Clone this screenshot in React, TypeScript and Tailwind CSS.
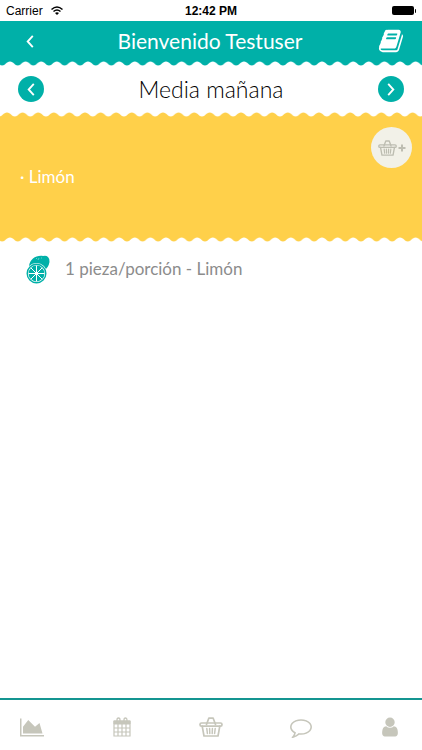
import React from 'react';

type IconProps = {
  className?: string;
};

const BookIcon = ({ className }: IconProps) => (
  <svg className={className} viewBox="0 0 1792 1792" fill="currentColor" aria-hidden="true">
    <path d="M1703 478q40 57 18 129l-275 906q-19 64-76.5 107.5t-122.5 43.5h-923q-77 0-148.5-53.5t-99.5-131.5q-24-67-2-127 0-4 3-27t4-37q1-8-3-21.5t-3-19.5q2-11 8-21t16.5-23.5 16.5-23.5q23-38 45-91.5t30-91.5q3-10 .5-30t-.5-28q3-11 17-28t17-23q21-36 42-92t25-90q1-9-2.5-32t.5-28q4-13 22-30.5t22-22.5q19-26 42.5-84.5t27.5-96.5q1-8-3-25.5t-2-26.5q2-8 9-18t18-23 17-21q8-12 16.5-30.5t15-35 16-36 19.5-32 26.5-23.5 36-11.5 47.5 5.5l-1 3q38-9 51-9h761q74 0 114 56t18 130l-274 906q-36 119-71.5 153.5t-128.5 34.5h-869q-27 0-38 15-11 16-1 43 24 70 144 70h923q29 0 56-15.5t35-41.5l300-987q7-22 5-57 38 15 59 43zm-1064 2q-4 13 2 22.5t20 9.5h608q13 0 25.5-9.5t16.5-22.5l21-64q4-13-2-22.5t-20-9.5h-608q-13 0-25.5 9.5t-16.5 22.5zm-83 256q-4 13 2 22.5t20 9.5h608q13 0 25.5-9.5t16.5-22.5l21-64q4-13-2-22.5t-20-9.5h-608q-13 0-25.5 9.5t-16.5 22.5z" />
  </svg>
);

const ChartIcon = ({ className }: IconProps) => (
  <svg className={className} viewBox="0 0 2048 1792" fill="currentColor" aria-hidden="true">
    <path d="M2048 1536v128h-2048v-1536h128v1408h1920zM1664 512l256 896h-1664v-576l448-576 576 576z" />
  </svg>
);

const CalendarIcon = ({ className }: IconProps) => (
  <svg className={className} viewBox="0 0 18 20" fill="none" stroke="currentColor" aria-hidden="true">
    <path d="M1 4h16v3H1z" fill="currentColor" />
    <path d="M1 4h16v15H1zM1 11h16M1 15h16M5 7v12M9 7v12M13 7v12" strokeWidth="1.2" />
    <path d="M4 5V3q0-2 1.5-2T7 3v2M11 5V3q0-2 1.5-2T14 3v2" strokeWidth="1.3" />
  </svg>
);

const BasketIcon = ({ className }: IconProps) => (
  <svg
    className={className}
    viewBox="0 0 24 20"
    fill="none"
    stroke="currentColor"
    strokeWidth="1.7"
    strokeLinejoin="round"
    strokeLinecap="round"
    aria-hidden="true"
  >
    <rect x="1" y="6" width="22" height="3.2" rx="1.5" />
    <path d="M3.2 9.2L5 19h14l1.800-9.800M7.500 7.500L9.800 1.200h4.400l2.300 6.300" />
    <path d="M7.800 11.500l.6 5M10.600 11.500l.2 5M13.400 11.500l-.2 5M16.200 11.500l-.6 5" strokeWidth="1.5" />
  </svg>
);

const CommentIcon = ({ className }: IconProps) => (
  <svg className={className} viewBox="0 0 1792 1792" fill="currentColor" aria-hidden="true">
    <path d="M896 384q-204 0-381.5 69.5t-282 187.5-104.5 255q0 112 71.5 213.5t201.5 175.5l87 50-27 96q-24 91-70 172 152-63 275-171l43-38 57 6q69 8 130 8 204 0 381.5-69.5t282-187.5 104.5-255-104.5-255-282-187.5-381.5-69.5zm896 512q0 174-120 321.5t-326 233-450 85.5q-70 0-145-8-198 175-460 242-49 14-114 22h-5q-15 0-27-10.5t-16-27.5v-1q-3-4-.5-12t2-10 4.5-9.500l6-9 7-8.500 8-9q7-8 31-34.500t34.500-38 31-39.500 32.500-51 27-59 26-76q-157-89-247.500-220t-90.500-281q0-174 120-321.500t326-233 450-85.500 450 85.500 326 233 120 321.500z" />
  </svg>
);

const UserIcon = ({ className }: IconProps) => (
  <svg className={className} viewBox="0 0 1792 1792" fill="currentColor" aria-hidden="true">
    <path d="M1536 1399q0 109-62.5 187t-150.5 78h-854q-88 0-150.5-78t-62.5-187q0-85 8.5-160.5t31.5-152 58.5-131 94-89 134.5-34.5q131 128 313 128t313-128q76 0 134.5 34.5t94 89 58.5 131 31.5 152 8.5 160.5zm-256-887q0 159-112.5 271.5t-271.5 112.5-271.5-112.5-112.5-271.5 112.5-271.5 271.5-112.5 271.5 112.5 112.5 271.5z" />
  </svg>
);

const ChevronIcon = ({ className }: IconProps) => (
  <svg className={className} viewBox="0 0 8 14" fill="none" stroke="currentColor" strokeWidth="2" aria-hidden="true">
    <path d="M7 1L1.500 7 7 13" />
  </svg>
);

const LemonIcon = ({ className }: IconProps) => (
  <svg className={className} viewBox="0 0 24 29" fill="none" aria-hidden="true">
    <path d="M3 11C4 4 10 0 17 1q3-1 5 1 2 2 1.500 5-1 6-6 9z" fill="#00b0a8" />
    <path d="M10 4l1-1M12 5l1-2M15 3l1 0" stroke="#7fd8d3" strokeWidth="0.8" />
    <circle cx="10.500" cy="18.500" r="10.500" fill="#fff" />
    <circle cx="10.500" cy="18.500" r="9.300" stroke="#00b0a8" strokeWidth="1.400" />
    <circle cx="10.500" cy="18.500" r="7.900" fill="#00b0a8" />
    <path d="M10.500 10.500v16M2.500 18.500h16M5 13l11 11M16 13L5 24" stroke="#fff" />
    <circle cx="10.500" cy="18.500" r="1.300" fill="#fff" />
  </svg>
);

const WifiIcon = ({ className }: IconProps) => (
  <svg className={className} viewBox="0 0 12 9" fill="none" stroke="currentColor" strokeWidth="1.500" aria-hidden="true">
    <path d="M.5 3.500q5.500-5 11 0M2.500 5.500q3.500-3 7 0" />
    <path d="M4 7q2-1.500 4 0L6 9z" fill="currentColor" stroke="none" />
  </svg>
);

// repeating scalloped edge, drawn in the current text colour
const WavyEdge = ({ id, start, className }: { id: string; start: number; className?: string }) => (
  <svg className={`block h-[5px] w-full ${className}`} aria-hidden="true">
    <defs>
      <pattern id={id} x={start} width="15.6" height="5" patternUnits="userSpaceOnUse">
        <path d="M0 0h15.600v.5C12 .5 11 4.500 7.800 4.500S3.600 .5 0 .5z" fill="currentColor" />
      </pattern>
    </defs>
    <rect width="100%" height="5" fill={`url(#${id})`} />
  </svg>
);

const TABS = [
  { label: 'Progreso', icon: <ChartIcon className="h-[21px] w-6" /> },
  { label: 'Calendario', icon: <CalendarIcon className="h-5 w-[18px]" /> },
  { label: 'Cesta', icon: <BasketIcon className="h-5 w-6" /> },
  { label: 'Mensajes', icon: <CommentIcon className="size-[22px]" /> },
  { label: 'Perfil', icon: <UserIcon className="size-[22px]" /> },
];

const App = () => {
  return (
    <div className="flex min-h-screen flex-col bg-white font-['Lato',sans-serif]">
      {/* Status bar */}
      <div className="grid h-[21px] grid-cols-3 items-center px-[6px] font-['Liberation_Sans',sans-serif] text-xs text-black">
        <div className="flex items-center gap-2">
          <span>Carrier</span>
          <WifiIcon className="h-[9px] w-3" />
        </div>
        <span className="text-center font-bold">12:42 PM</span>
        <div className="flex items-center justify-end gap-px">
          <span className="h-[9px] w-[22px] rounded-xs bg-black" />
          <span className="h-1 w-px rounded-r bg-black" />
        </div>
      </div>

      {/* Header */}
      <header className="flex h-10 items-center justify-between bg-[#00b0a8] px-[18px] text-white">
        <button className="flex w-6 justify-center" aria-label="Volver">
          <ChevronIcon className="h-[13px] w-2" />
        </button>
        <h1 className="text-[21px] leading-10">Bienvenido Testuser</h1>
        <button aria-label="Diario">
          <BookIcon className="size-[26px]" />
        </button>
      </header>
      <WavyEdge id="edge-header" start={10} className="text-[#00b0a8]" />

      <div className="flex h-[46px] items-center justify-between px-[18px]">
        <button className="flex size-[26px] items-center justify-center rounded-full bg-[#00b0a8] text-white" aria-label="Anterior">
          <ChevronIcon className="h-[13px] w-2" />
        </button>
        <h2 className="text-[23px] font-light text-black">Media mañana</h2>
        <button className="flex size-[26px] items-center justify-center rounded-full bg-[#00b0a8] text-white" aria-label="Siguiente">
          <ChevronIcon className="h-[13px] w-2 rotate-180" />
        </button>
      </div>

      {/* Meal */}
      <section>
        <WavyEdge id="edge-top" start={7} className="bg-[#ffd04a] text-white" />
        <div className="relative flex h-[120px] items-center bg-[#ffd04a] px-5">
          <p className="text-[17px] text-white">· Limón</p>
          <button className="absolute top-[10px] right-[10px] flex size-[41px] items-center justify-center gap-px rounded-full bg-[#f2f1e8] text-[#bdbdb1]" aria-label="Añadir a la cesta">
            <BasketIcon className="h-4 w-[19px]" />
            <svg className="size-2" viewBox="0 0 8 8" stroke="currentColor" strokeWidth="2" aria-hidden="true">
              <path d="M4 .5v7M.5 4h7" />
            </svg>
          </button>
        </div>
        <WavyEdge id="edge-bottom" start={10} className="text-[#ffd04a]" />
      </section>

      <ul className="flex-1">
        <li className="flex h-[54px] items-center gap-[15px] px-[26px] text-[#8c8c8c]">
          <LemonIcon className="h-[29px] w-6" />
          <span className="text-[17px]">1 pieza/porción - Limón</span>
        </li>
      </ul>

      <nav className="flex h-[52px] items-center justify-between border-t-2 border-[#149591] px-5 pt-1 text-[#c6c6bb]">
        {TABS.map((tab) => (
          <button key={tab.label} className="flex w-6 justify-center" aria-label={tab.label}>
            {tab.icon}
          </button>
        ))}
      </nav>
    </div>
  );
};

export default App;
